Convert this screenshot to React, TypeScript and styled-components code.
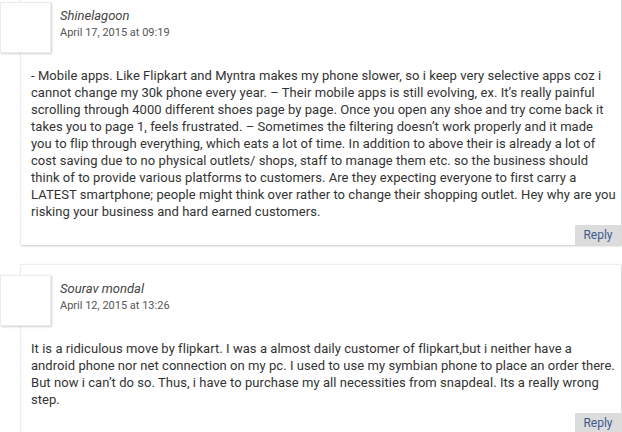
import React from 'react';
import styled, { createGlobalStyle } from 'styled-components';

const GlobalStyle = createGlobalStyle`
    html, body {
        margin: 0;
        padding: 0;
        background: #fff;
        overflow: hidden;
    }
`;

const List = styled.section`
    display: flex;
    flex-direction: column;
    gap: 19px;
    margin-top: -9px;
    width: 622px;
    font-family: Roboto, "Liberation Sans", sans-serif;
`;

const Card = styled.article`
    position: relative;
    margin-left: 20px;
    width: 600px;
    padding-top: 10px;
    background: #fff;
    border: 1px solid #ececec;
    border-right: none;
    border-bottom: none;
    box-shadow: 1px 1px 2px rgba(0, 0, 0, 0.22);
    display: flex;
    flex-direction: column;
`;

const Avatar = styled.div`
    position: absolute;
    left: -21px;
    top: 10px;
    width: 49px;
    height: 49px;
    background: #fff;
    border: 1px solid #ececec;
    box-shadow: 1px 1px 2px rgba(0, 0, 0, 0.18);
`;

const Header = styled.header`
    height: 50px;
    padding-left: 39px;
    padding-top: 5px;
    box-sizing: border-box;
`;

const Name = styled.p`
    margin: 0;
    font-size: 13px;
    line-height: 17px;
    font-style: italic;
    color: #444;
`;

const Date = styled.p`
    margin: 1px 0 0;
    font-size: 11px;
    line-height: 15px;
    color: #555;
`;

const Body = styled.p`
    margin: 15px 4.5px 5px 10px;
    font-size: 13px;
    line-height: 17px;
    letter-spacing: 0.05px;
    color: #333;
`;

const Actions = styled.footer`
    display: flex;
    justify-content: flex-end;
`;

const ReplyButton = styled.button`
    background: #dcdcdc;
    border: none;
    height: 20px;
    width: 46px;
    padding: 0;
    font-family: Roboto, "Liberation Sans", sans-serif;
    font-size: 12px;
    color: #3d5a8c;
    cursor: pointer;
`;

type Comment = {
    name: string;
    date: string;
    text: string;
};

const comments: Comment[] = [
    {
        name: 'Shinelagoon',
        date: 'April 17, 2015 at 09:19',
        text: '- Mobile apps. Like Flipkart and Myntra makes my phone slower, so i keep very selective apps coz i cannot change my 30k phone every year. \u2013 Their mobile apps is still evolving, ex. It\u2019s really painful scrolling through 4000 different shoes page by page. Once you open any shoe and try come back it takes you to page 1, feels frustrated. \u2013 Sometimes the filtering doesn\u2019t work properly and it made you to flip through everything, which eats a lot of time. In addition to above their is already a lot of cost saving due to no physical outlets/ shops, staff to manage them etc. so the business should think of to provide various platforms to customers. Are they expecting everyone to first carry a LATEST smartphone; people might think over rather to change their shopping outlet. Hey why are you risking your business and hard earned customers.',
    },
    {
        name: 'Sourav mondal',
        date: 'April 12, 2015 at 13:26',
        text: 'It is a ridiculous move by flipkart. I was a almost daily customer of flipkart,but i neither have a android phone nor net connection on my pc. I used to use my symbian phone to place an order there. But now i can\u2019t do so. Thus, i have to purchase my all necessities from snapdeal. Its a really wrong step.',
    },
];

const App = () => (
    <React.Fragment>
        <GlobalStyle />
        <List>
            {comments.map((c) => (
                <Card key={c.name}>
                    <Avatar />
                    <Header>
                        <Name>{c.name}</Name>
                        <Date>{c.date}</Date>
                    </Header>
                    <Body>{c.text}</Body>
                    <Actions>
                        <ReplyButton>Reply</ReplyButton>
                    </Actions>
                </Card>
            ))}
        </List>
    </React.Fragment>
);

export default App;
